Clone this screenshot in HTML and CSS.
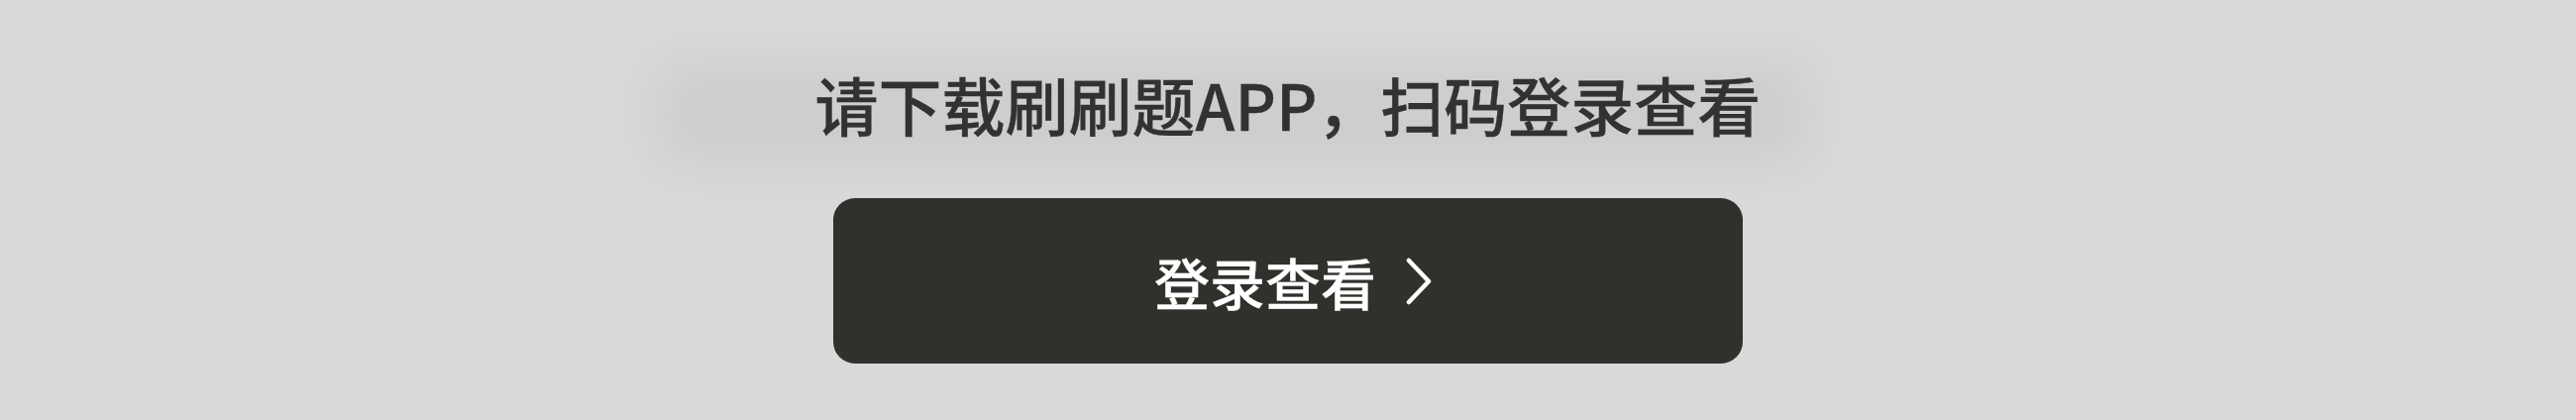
FILE: index.html
```html
<!DOCTYPE html>
<html lang="zh-CN">
<head>
  <meta charset="UTF-8" />
  <title>刷刷题</title>
  <link rel="stylesheet" href="styles.css">
</head>
<body>

  <div class="login-tip">
    <div class="tip-title">请下载刷刷题APP，扫码登录查看</div>
    <button class="login-btn">
      <span>登录查看</span>
      <svg class="arrow" viewBox="0 0 26 48" width="26" height="48">
        <path d="M3 3 L23 24 L3 45" fill="none" stroke="#fff" stroke-width="4.5" stroke-linecap="round" stroke-linejoin="round" />
      </svg>
    </button>
  </div>

</body>
</html>
```

FILE: styles.css
```css
:root {
  --bg: #dadada;
  --text-dark: #333230;
  --btn-bg: #32302c;
  --text-light: #fff;
}

body {
  margin: 0;
  height: 424px;
  background: var(--bg);
  font-family: "Noto Sans CJK SC", "Noto Sans", sans-serif;
  overflow: hidden;
}

.login-tip {
  display: flex;
  flex-direction: column;
  align-items: center;
  padding-top: 72px;
}

.tip-title {
  position: relative;
  font-size: 64px;
  line-height: 64px;
  font-weight: 500;
  color: var(--text-dark);
  -webkit-text-stroke: 0.3px var(--text-dark);
}

/* soft grey haze behind the title */
.tip-title::before {
  content: "";
  position: absolute;
  left: -160px;
  right: -50px;
  top: -10px;
  bottom: -30px;
  background: rgba(0, 0, 0, 0.06);
  filter: blur(28px);
  z-index: -1;
}

.login-btn {
  margin-top: 64px;
  width: 918px;
  height: 167px;
  display: flex;
  align-items: center;
  justify-content: center;
  gap: 30px;
  padding: 0 0 0 10px;
  background: var(--btn-bg);
  color: var(--text-light);
  border: none;
  border-radius: 22px;
  font-family: inherit;
  font-size: 56px;
  font-weight: 500;
  -webkit-text-stroke: 0.3px var(--text-light);
  cursor: pointer;
}

.arrow {
  display: block;
}
```
